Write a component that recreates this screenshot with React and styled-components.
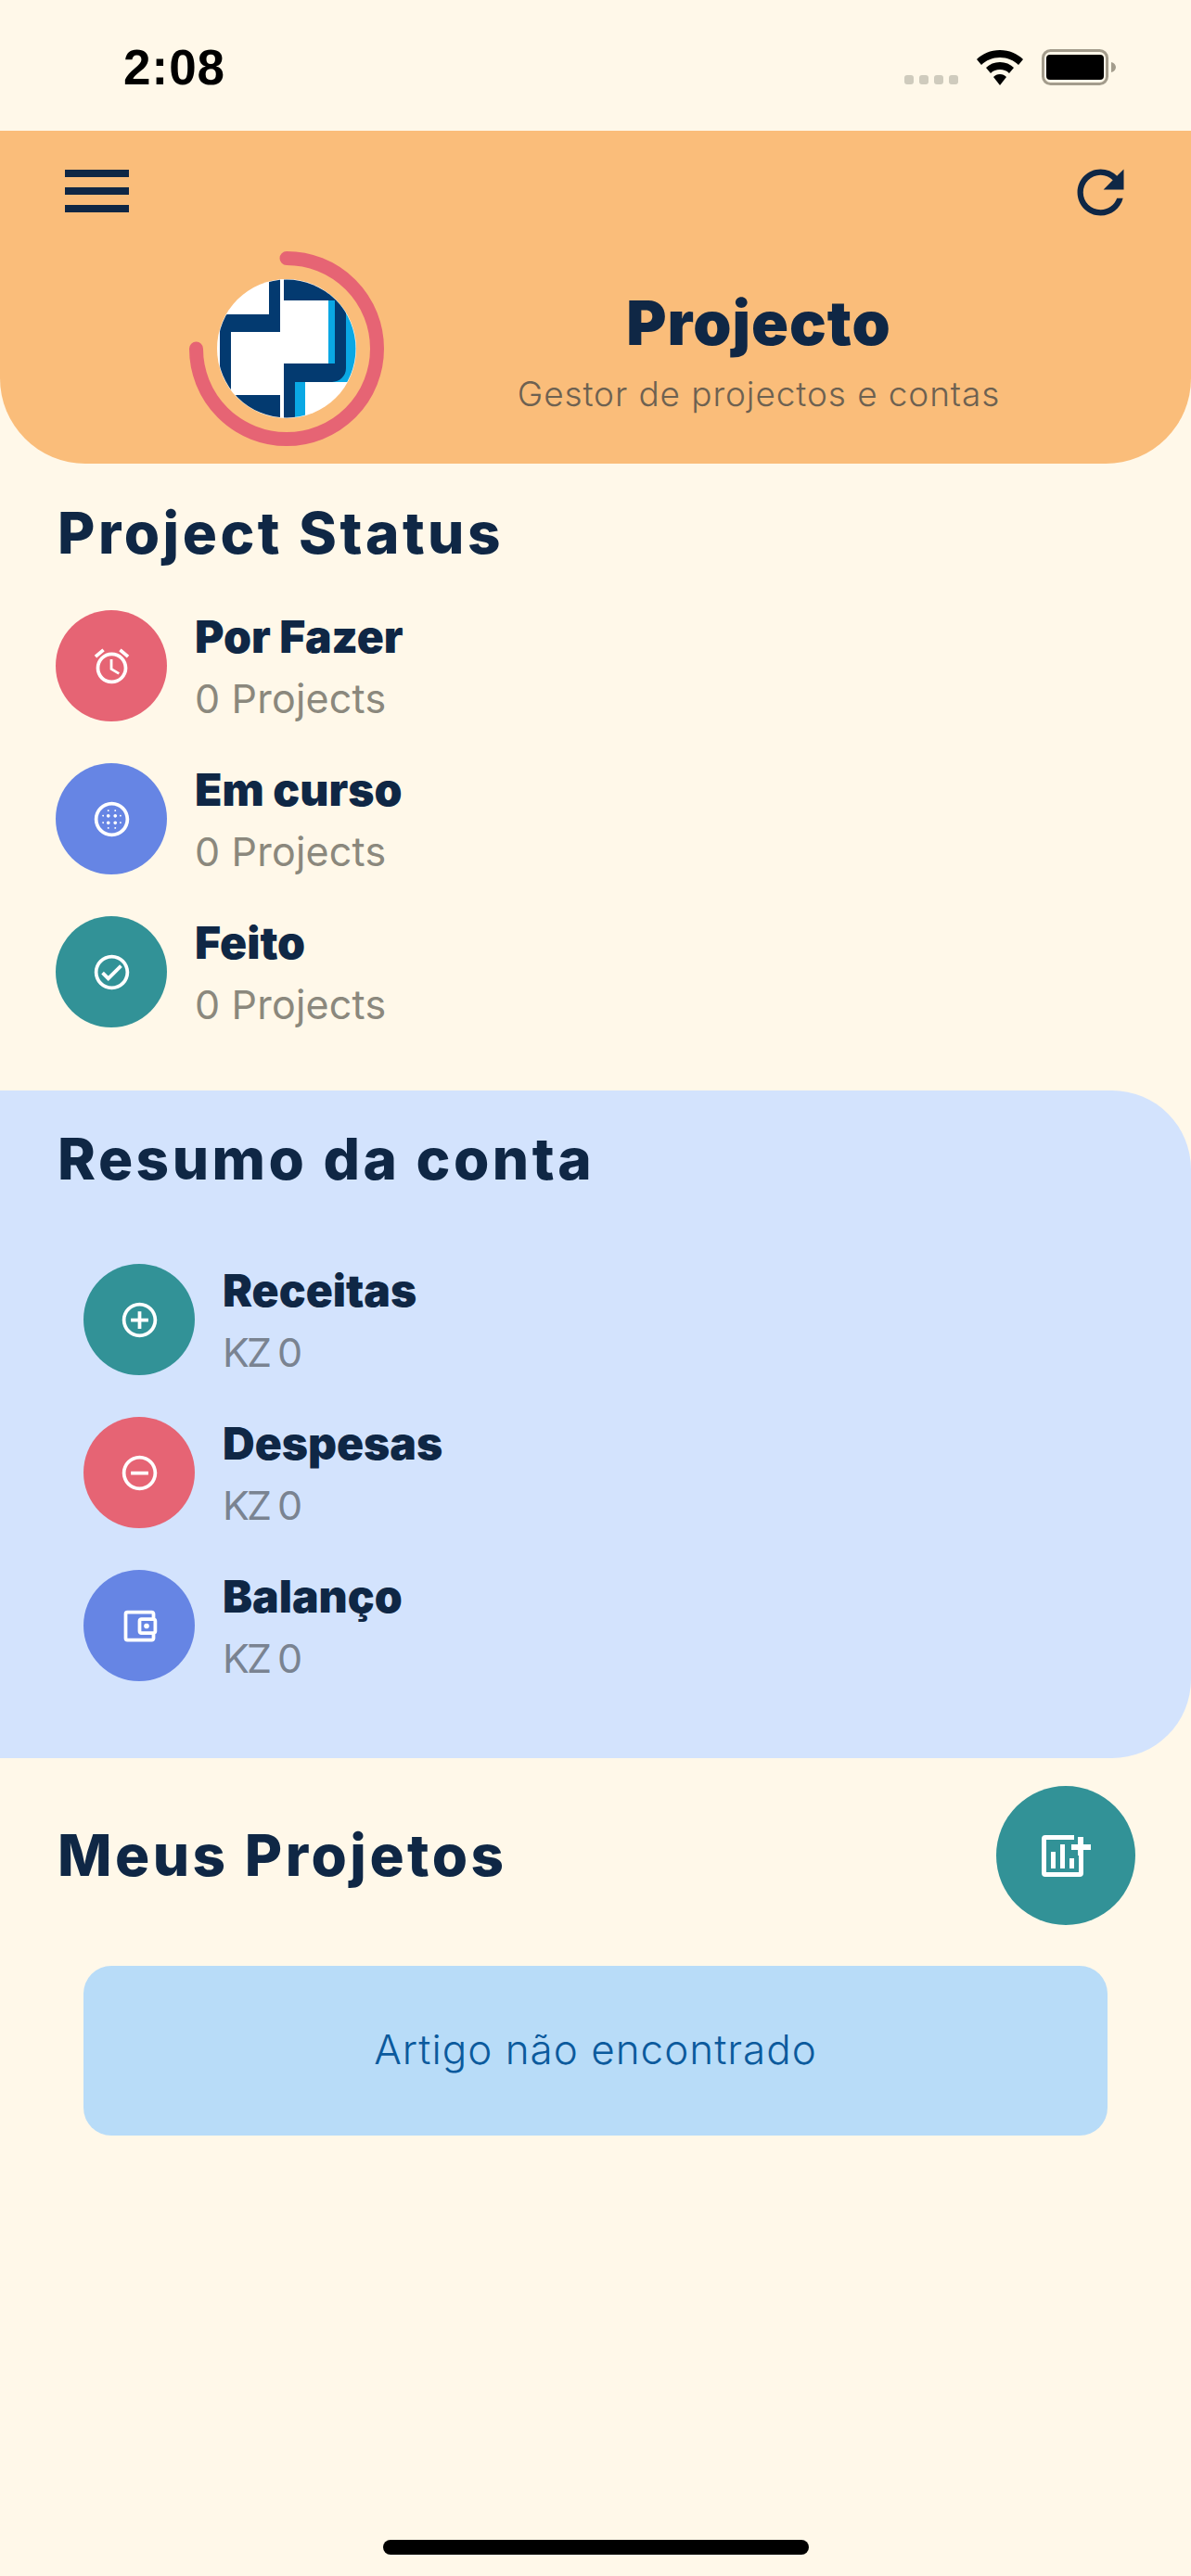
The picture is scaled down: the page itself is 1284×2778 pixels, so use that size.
import styled, { createGlobalStyle } from "styled-components";
import {
  MdAccessAlarm,
  MdBlurCircular,
  MdOutlineCheckCircle,
  MdAddCircleOutline,
  MdRemoveCircleOutline,
  MdOutlineAccountBalanceWallet,
  MdRefresh,
} from "react-icons/md";

const Global = createGlobalStyle`
  html, body { margin: 0; padding: 0; background: #fff8e9; }
  body { font-family: "Inter", "Liberation Sans", sans-serif; }
`;

const colors = {
  navy: "#0f2745",
  red: "#e66474",
  blue: "#6685e4",
  teal: "#329297",
  orange: "#fabd7a",
  panel: "#d3e3fd",
};

const Page = styled.div`
  width: 1284px;
  height: 2778px;
  background: #fff8e9;
  display: flex;
  flex-direction: column;
  position: relative;
  overflow: hidden;
`;
const StatusBar = styled.div`
  height: 141px;
  display: flex;
  align-items: center;
  justify-content: space-between;
  padding: 4px 81px 0 133px;
  box-sizing: border-box;
`;
const Clock = styled.span`
  font-family: "Liberation Sans", sans-serif;
  font-size: 53px;
  font-weight: 700;
  letter-spacing: 1px;
  color: #000;
`;
const StatusIcons = styled.div`
  display: flex;
  align-items: flex-end;
  gap: 19px;
`;
const Dots = styled.div`
  display: flex;
  gap: 6px;
  padding-bottom: 1px;
`;
const Dot = styled.i`
  width: 10px;
  height: 10px;
  border-radius: 3px;
  background: #cfcbbd;
`;

const Header = styled.header`
  height: 359px;
  background: ${colors.orange};
  border-radius: 0 0 92px 92px;
  padding: 42px 70px 0;
  box-sizing: border-box;
`;
const HeaderTop = styled.div`
  display: flex;
  justify-content: space-between;
  height: 60px;
`;
const Burger = styled.div`
  width: 69px;
  display: flex;
  flex-direction: column;
  gap: 11px;
`;
const BurgerLine = styled.span`
  height: 8px;
  background: ${colors.navy};
`;
const RefreshIcon = styled(MdRefresh)`
  margin: -13px -10px 0 0;
  color: ${colors.navy};
`;
const HeaderMain = styled.div`
  display: flex;
  align-items: flex-start;
  margin-top: 28px;
`;
const LogoWrap = styled.div`
  width: 210px;
  height: 210px;
  margin-left: 134px;
  flex: none;
`;
const HeaderText = styled.div`
  flex: 1;
  display: flex;
  flex-direction: column;
  align-items: center;
  padding-top: 37px;
  margin-left: 48px;
  margin-right: 40px;
`;
const Title = styled.h1`
  margin: 0;
  font-size: 66px;
  line-height: 80px;
  font-weight: 900;
  letter-spacing: 1px;
  color: ${colors.navy};
`;
const Subtitle = styled.p`
  margin: 12px 0 0;
  font-size: 37px;
  line-height: 50px;
  font-weight: 300;
  letter-spacing: 0.9px;
  color: #6d6151;
`;

const Section = styled.section`
  padding: 37px 0 0 62px;
`;
const Panel = styled.section`
  height: 720px;
  box-sizing: border-box;
  background: ${colors.panel};
  border-radius: 0 85px 85px 0;
  padding: 36px 0 0 62px;
  margin-top: 68px;
`;
const Heading = styled.h2`
  margin: 0;
  font-size: 62px;
  line-height: 76px;
  font-weight: 800;
  letter-spacing: 3.5px;
  color: ${colors.navy};
`;
const List = styled.div`
  display: flex;
  flex-direction: column;
  gap: 45px;
  margin: ${(p) => p.$margin};
`;
const Row = styled.div`
  display: flex;
  align-items: center;
  gap: 30px;
  height: 120px;
`;
const Circle = styled.div`
  width: ${(p) => p.$size || 120}px;
  height: ${(p) => p.$size || 120}px;
  flex: none;
  border-radius: 50%;
  background: ${(p) => p.$bg};
  color: #fff;
  display: flex;
  align-items: center;
  justify-content: center;
`;
const RowText = styled.div`
  padding-top: 4px;
`;
const RowName = styled.div`
  font-size: 48px;
  line-height: 60px;
  font-weight: 900;
  color: ${colors.navy};
`;
const RowSub = styled.div`
  font-size: 43px;
  line-height: 60px;
  margin-top: 6px;
  letter-spacing: ${(p) => p.$spacing};
  color: ${(p) => p.$color};
`;
const ProjectsHead = styled.div`
  display: flex;
  align-items: center;
  justify-content: space-between;
  padding: 30px 60px 0 62px;
`;
const Alert = styled.div`
  margin: 44px 90px 0;
  height: 183px;
  border-radius: 30px;
  background: #b8dcf8;
  color: #0b5a9d;
  font-size: 44px;
  line-height: 50px;
  padding-bottom: 3px;
  box-sizing: border-box;
  font-weight: 300;
  letter-spacing: 1px;
  display: flex;
  align-items: center;
  justify-content: center;
`;
const HomeBar = styled.div`
  position: absolute;
  left: 413px;
  bottom: 23px;
  width: 459px;
  height: 16px;
  border-radius: 8px;
  background: #000;
`;

const AddChart = () => (
  <svg width="53" height="45" viewBox="0 0 53 45" fill="#fff">
    <path d="M4 0h31v5H5v35h35V22h5v19a4 4 0 0 1-4 4H4a4 4 0 0 1-4-4V4a4 4 0 0 1 4-4z" />
    <path d="M10 18h5v18h-5zM20 10h5v26h-5zM30 25h5v11h-5z" />
    <path d="M39 2h6v8h8v6h-8v6h-6v-6h-7v-6h7z" />
  </svg>
);

const Wifi = () => (
  <svg width="52" height="38" viewBox="0 0 52 38" fill="#000">
    <path d="M26 0C16 0 7 4 1 10l5 6c5-5 12-8 20-8s15 3 20 8l5-6C45 4 36 0 26 0z" />
    <path d="M26 13c-6 0-11 2-15 6l5 6c3-3 6-4 10-4s7 1 10 4l5-6c-4-4-9-6-15-6z" />
    <path d="M26 26c-3 0-5 1-7 3l7 9 7-9c-2-2-4-3-7-3z" />
  </svg>
);
const Battery = () => (
  <svg width="80" height="39" viewBox="0 0 80 39">
    <rect x="1.500" y="1.500" width="69" height="36" rx="8" fill="none" stroke="#a39c8c" strokeWidth="3" />
    <rect x="5" y="6" width="62" height="27" rx="4" fill="#000" />
    <path d="M75 14c3 .5 5 3 5 5.500s-2 5-5 5.500z" fill="#a39c8c" />
  </svg>
);

const Logo = () => (
  <svg width="210" height="210" viewBox="0 0 210 210">
    <defs>
      <clipPath id="logoClip">
        <circle cx="105" cy="105" r="74.500" />
      </clipPath>
    </defs>
    <circle cx="105" cy="105" r="75" fill="#fff" />
    <g clipPath="url(#logoClip)">
      <path d="M150 40h40v91a10 10 0 0 1-10 10h-30z" fill="#0aa8e4" />
      <rect x="114" y="141" width="11" height="40" fill="#0aa8e4" />
      <path d="M86 28h12v59H45v70H33V76a8 8 0 0 1 8-8h45z" fill="#033a70" />
      <rect x="40" y="155" width="58" height="26" fill="#033a70" />
      <path d="M102 28h67v98a15 15 0 0 1-15 15h-40v40h-12v-60h55V53h-55z" fill="#033a70" />
    </g>
    <path d="M7.500 105A97.500 97.500 0 1 0 105 7.500" fill="none" stroke={colors.red} strokeWidth="15" strokeLinecap="round" />
  </svg>
);

const projectRows = [
  { name: "Por Fazer", sub: "0 Projects", bg: colors.red, icon: <MdAccessAlarm size={45} /> },
  { name: "Em curso", sub: "0 Projects", bg: colors.blue, icon: <MdBlurCircular size={45} /> },
  { name: "Feito", sub: "0 Projects", bg: colors.teal, icon: <MdOutlineCheckCircle size={45} /> },
];
const accountRows = [
  { name: "Receitas", sub: "KZ 0", bg: colors.teal, icon: <MdAddCircleOutline size={45} /> },
  { name: "Despesas", sub: "KZ 0", bg: colors.red, icon: <MdRemoveCircleOutline size={45} /> },
  { name: "Balanço", sub: "KZ 0", bg: colors.blue, icon: <MdOutlineAccountBalanceWallet size={45} /> },
];

function InfoList({ rows, margin, subColor, subSpacing }) {
  return (
    <List $margin={margin}>
      {rows.map((r) => (
        <Row key={r.name}>
          <Circle $bg={r.bg}>{r.icon}</Circle>
          <RowText>
            <RowName>{r.name}</RowName>
            <RowSub $color={subColor} $spacing={subSpacing}>
              {r.sub}
            </RowSub>
          </RowText>
        </Row>
      ))}
    </List>
  );
}

export default function App() {
  return (
    <Page>
      <Global />
      <StatusBar>
        <Clock>2:08</Clock>
        <StatusIcons>
          <Dots>
            <Dot />
            <Dot />
            <Dot />
            <Dot />
          </Dots>
          <Wifi />
          <Battery />
        </StatusIcons>
      </StatusBar>
      <Header>
        <HeaderTop>
          <Burger>
            <BurgerLine />
            <BurgerLine />
            <BurgerLine />
          </Burger>
          <RefreshIcon size={75} />
        </HeaderTop>
        <HeaderMain>
          <LogoWrap>
            <Logo />
          </LogoWrap>
          <HeaderText>
            <Title>Projecto</Title>
            <Subtitle>Gestor de projectos e contas</Subtitle>
          </HeaderText>
        </HeaderMain>
      </Header>
      <Section>
        <Heading>Project Status</Heading>
        <InfoList rows={projectRows} margin="45px 0 0 -2px" subColor="#8b887d" subSpacing="0.2px" />
      </Section>
      <Panel>
        <Heading>Resumo da conta</Heading>
        <InfoList rows={accountRows} margin="75px 0 0 28px" subColor="#7a8391" subSpacing="-3px" />
      </Panel>
      <ProjectsHead>
        <Heading>Meus Projetos</Heading>
        <Circle $size={150} $bg={colors.teal}>
          <AddChart />
        </Circle>
      </ProjectsHead>
      <Alert>Artigo não encontrado</Alert>
      <HomeBar />
    </Page>
  );
}
